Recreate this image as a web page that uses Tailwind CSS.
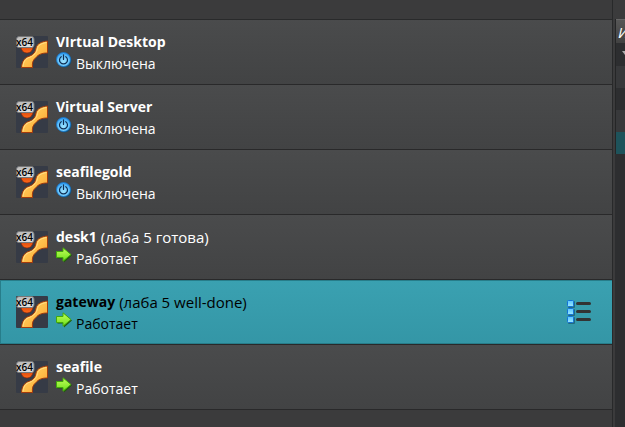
<!DOCTYPE html>
<html lang="ru">
<head>
<meta charset="utf-8">
<meta name="viewport" content="width=device-width, initial-scale=1">
<title>Виртуальные машины</title>
<script src="https://cdn.jsdelivr.net/npm/@tailwindcss/browser@4"></script>
</head>
<body class="flex h-screen overflow-hidden bg-[#2d2e30] font-['Open_Sans','Noto_Sans',sans-serif] text-sm text-white">
<svg class="absolute size-0" aria-hidden="true">
  <defs>
    <linearGradient id="gold" x1="0" y1="0" x2="1" y2="1"><stop offset="0" stop-color="#ffd86a"/><stop offset=".55" stop-color="#ffbd49"/><stop offset="1" stop-color="#f9982c"/></linearGradient>
    <linearGradient id="ball" x1="0" y1="0" x2="0" y2="1"><stop offset="0" stop-color="#b82c08"/><stop offset="1" stop-color="#ff6a18"/></linearGradient>
    <linearGradient id="badge" x1="0" y1="0" x2="0" y2="1"><stop offset="0" stop-color="#b9b9b9"/><stop offset="1" stop-color="#e2e2e2"/></linearGradient>
    <linearGradient id="green" x1="0" y1="0" x2="0" y2="1"><stop offset="0" stop-color="#c4ff5a"/><stop offset="1" stop-color="#6ce01c"/></linearGradient>
    <radialGradient id="blue" cx=".5" cy=".65" r=".6"><stop offset="0" stop-color="#9be2ff"/><stop offset=".7" stop-color="#62c2fb"/><stop offset="1" stop-color="#2f9bf0"/></radialGradient>
    <linearGradient id="cell" x1="0" y1="0" x2="0" y2="1"><stop offset="0" stop-color="#58c4ff"/><stop offset="1" stop-color="#9ce8ff"/></linearGradient>
    <symbol id="os" viewBox="0 0 32 32">
      <rect width="32" height="32" rx="1" fill="#363b46"/>
      <circle cx="11" cy="11" r="6" fill="url(#ball)" stroke="#8a2208" stroke-width=".6"/>
      <path d="M31.500 5C26 5.500 21 7.500 20 12C19.500 16 17.500 18.500 14 20C8.500 21.500 6 25 5.500 31.500H16.500C16 26.500 17 24 20 21.500C22.500 18.500 25.500 17 31.500 17Z" fill="url(#gold)" stroke="#a23a0c" stroke-width="1"/>
      <path d="M30.500 6.500C25 7.500 22 9.500 21.500 12.500C21 16.500 18 19.500 14 21.200C9 22.500 7.500 26 7 30.500" fill="none" stroke="#ffe08c" stroke-width="1"/>
      <rect x=".5" y=".5" width="17.500" height="11" rx="2.500" fill="url(#badge)" stroke="#777"/>
      <text x="0" y="10" font-family="Open Sans, sans-serif" font-size="10" font-weight="600" fill="#000">x64</text>
    </symbol>
    <symbol id="off" viewBox="0 0 16 16">
      <circle cx="8.500" cy="8.500" r="7" fill="#174f72"/>
      <circle cx="7.500" cy="7.500" r="7" fill="url(#blue)" stroke="#1879cf" stroke-width=".8"/>
      <path d="M5.200 4.700A4 4 0 1 0 9.800 4.700M7.500 2.800V7.500" fill="none" stroke="#102f55" stroke-width="1.200" stroke-linecap="round"/>
    </symbol>
    <symbol id="on" viewBox="0 0 16 16">
      <path d="M1.500 5.500H8V1.500L16 8.500L8 15.500V11.500H1.500Z" fill="#235c0c"/>
      <path d="M.5 4.500H7V.8L15 7.500L7 14.200V10.500H.5Z" fill="url(#green)" stroke="#43a80c"/>
    </symbol>
  </defs>
</svg>

<main class="flex min-w-0 flex-1 flex-col border-r border-[#28292a] bg-[#3b3b3c]">
  <div class="h-5 shrink-0 border-b border-[#292a2b]"></div>
  <ul>
    <li class="flex h-[65px] items-center gap-2 border-b border-[#29292a] bg-linear-to-b from-[#4a4b4c] to-[#424344] px-4">
      <svg class="size-8 shrink-0" aria-hidden="true"><use href="#os"/></svg>
      <div class="min-w-0 flex-1 pt-0.5 leading-[22px]">
        <p class="font-bold">VIrtual Desktop</p>
        <p class="flex gap-1"><svg class="-mt-px size-4" aria-hidden="true"><use href="#off"/></svg>Выключена</p>
      </div>
    </li>
    <li class="flex h-[65px] items-center gap-2 border-b border-[#29292a] bg-linear-to-b from-[#4a4b4c] to-[#424344] px-4">
      <svg class="size-8 shrink-0" aria-hidden="true"><use href="#os"/></svg>
      <div class="min-w-0 flex-1 pt-0.5 leading-[22px]">
        <p class="font-bold">Virtual Server</p>
        <p class="flex gap-1"><svg class="-mt-px size-4" aria-hidden="true"><use href="#off"/></svg>Выключена</p>
      </div>
    </li>
    <li class="flex h-[65px] items-center gap-2 border-b border-[#29292a] bg-linear-to-b from-[#4a4b4c] to-[#424344] px-4">
      <svg class="size-8 shrink-0" aria-hidden="true"><use href="#os"/></svg>
      <div class="min-w-0 flex-1 pt-0.5 leading-[22px]">
        <p class="font-bold">seafilegold</p>
        <p class="flex gap-1"><svg class="-mt-px size-4" aria-hidden="true"><use href="#off"/></svg>Выключена</p>
      </div>
    </li>
    <li class="flex h-[65px] items-center gap-2 border-b border-[#29292a] bg-linear-to-b from-[#4a4b4c] to-[#424344] px-4">
      <svg class="size-8 shrink-0" aria-hidden="true"><use href="#os"/></svg>
      <div class="min-w-0 flex-1 pt-0.5 leading-[22px]">
        <p class="flex gap-1"><b>desk1</b><span class="text-[15px]">(лаба 5 готова)</span></p>
        <p class="flex gap-1"><svg class="-mt-px size-4" aria-hidden="true"><use href="#on"/></svg>Работает</p>
      </div>
    </li>
    <li class="flex h-[65px] items-center gap-2 border-b border-[#29292a] bg-linear-to-b from-[#3aa1b1] to-[#3496a6] px-4 text-black shadow-[inset_1px_0_#277d8a,inset_0_-1px_#277d8a,inset_0_1px_#277d8a]">
      <svg class="size-8 shrink-0" aria-hidden="true"><use href="#os"/></svg>
      <div class="min-w-0 flex-1 pt-0.5 leading-[22px]">
        <p class="flex gap-1"><b>gateway</b><span class="text-[15px]">(лаба 5 well-done)</span></p>
        <p class="flex gap-1"><svg class="-mt-px size-4" aria-hidden="true"><use href="#on"/></svg>Работает</p>
      </div>
      <button type="button" class="mr-1 h-6 w-[25px]" aria-label="Инструменты машины">
        <svg viewBox="0 0 25 24" aria-hidden="true">
          <g fill="#226a80"><rect x="1" y="1" width="7" height="7" rx="1"/><rect x="1" y="9" width="7" height="7" rx="1"/><rect x="1" y="17" width="7" height="7" rx="1"/></g>
          <g fill="url(#cell)" stroke="#1272d8"><rect x=".5" y=".5" width="6" height="6" rx="1"/><rect x=".5" y="8.500" width="6" height="6" rx="1"/><rect x=".5" y="16.500" width="6" height="6" rx="1"/></g>
          <path d="M10.500 3.500H22.500M10.500 11.500H22.500M10.500 19.500H22.500" stroke="#333" stroke-width="3" stroke-linecap="round"/>
        </svg>
      </button>
    </li>
    <li class="flex h-[65px] items-center gap-2 border-b border-[#29292a] bg-linear-to-b from-[#4a4b4c] to-[#424344] px-4">
      <svg class="size-8 shrink-0" aria-hidden="true"><use href="#os"/></svg>
      <div class="min-w-0 flex-1 pt-0.5 leading-[22px]">
        <p class="font-bold">seafile</p>
        <p class="flex gap-1"><svg class="-mt-px size-4" aria-hidden="true"><use href="#on"/></svg>Работает</p>
      </div>
    </li>
  </ul>
</main>
<div class="w-0.5 shrink-0 bg-[#3b3b3c]"></div>
<aside class="w-2.5 shrink-0 overflow-hidden">
  <div class="h-[19px] bg-[#3b3b3c]"></div>
  <div class="border-l border-[#252627]">
    <div class="h-6 border-t border-[#666] bg-linear-to-b from-[#565656] to-[#424242] pl-0.5 text-[15px] leading-6 italic">И</div>
    <div class="flex h-[23px] items-center pl-1.5"><svg class="h-2 w-3 shrink-0" viewBox="0 0 12 8" aria-hidden="true"><path d="M0 0H9L4.500 6Z" fill="#aaa"/></svg></div>
    <div class="h-[22px] bg-[#38393b]"></div>
    <div class="h-[22px]"></div>
    <div class="h-[22px] bg-[#38393b]"></div>
    <div class="h-[22px] bg-[#1e535b]"></div>
  </div>
</aside>
</body>
</html>
